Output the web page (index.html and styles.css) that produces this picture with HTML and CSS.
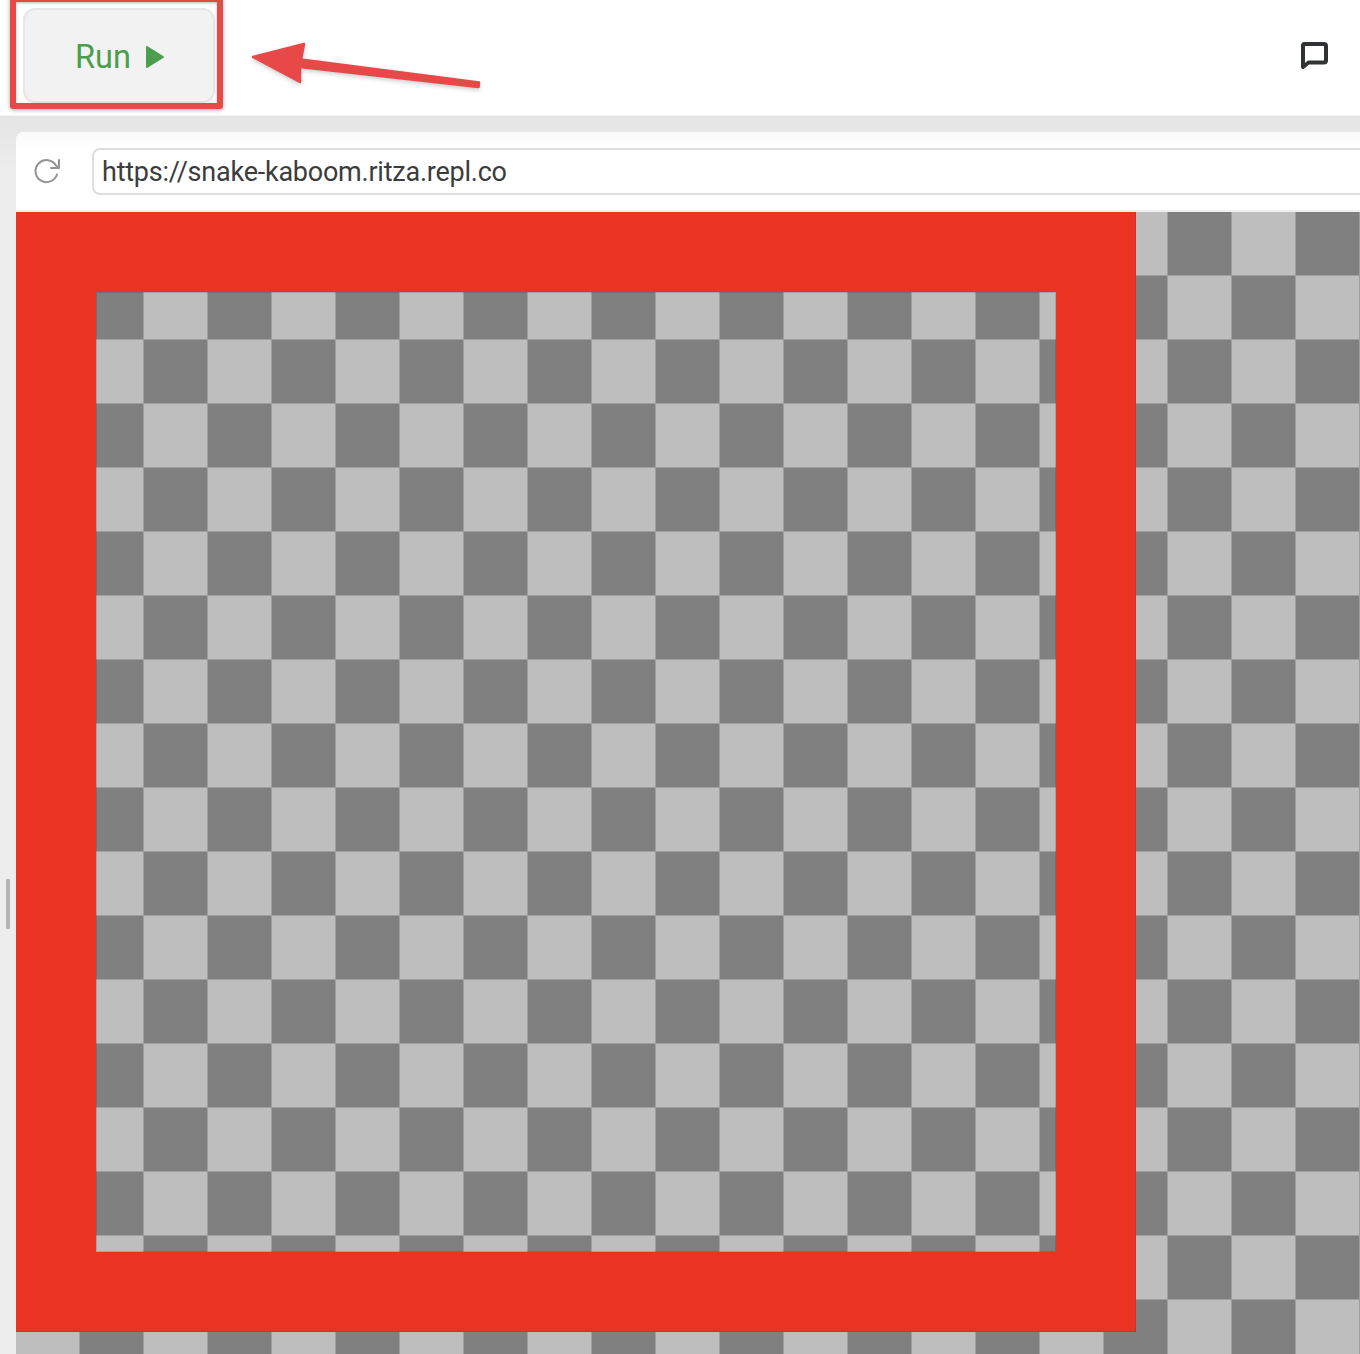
FILE: index.html
```html
<!DOCTYPE html>
<html lang="en">
<head>
<meta charset="utf-8">
<title>Snake Kaboom</title>
<link rel="stylesheet" href="styles.css">
</head>
<body>
<header class="topbar">
  <button class="run">
    <span class="run-label">Run</span>
    <svg class="play" width="20" height="24" viewBox="0 0 20 24"><path d="M2 2 18 12 2 22Z" fill="#4b9e4e" stroke="#4b9e4e" stroke-width="2" stroke-linejoin="round"/></svg>
  </button>
  <svg class="chat" width="32" height="32" viewBox="0 0 32 32"><path d="M4 5.5Q4 4 5.500 4H25Q27 4 27 6V20.500Q27 22.500 25 22.500H9.500L4 27Z" fill="none" stroke="#303233" stroke-width="4" stroke-linejoin="round"/></svg>
  <div class="highlight"></div>
  <svg class="arrow" width="244" height="64" viewBox="0 0 244 64"><path d="M13 27 64 14 61 29.500 239 52.500 238.500 57 60 37 60 52Z" fill="#e74848" stroke="#e74848" stroke-width="2.500" stroke-linejoin="round"/></svg>
</header>
<main class="workspace">
  <div class="divider"><div class="grip"></div></div>
  <section class="preview">
    <div class="address-bar">
      <svg class="reload" width="30" height="30" viewBox="0 0 30 30" fill="none" stroke="#939393" stroke-width="2" stroke-linecap="round" stroke-linejoin="round"><path d="M25 18.500A11 11 0 1 1 24 9.500L26.500 12M27 4V12H19"/></svg>
      <div class="url"><span class="url-text">https://snake-kaboom.ritza.repl.co</span></div>
    </div>
    <div class="game checker">
      <div class="wall"><div class="field checker"></div></div>
    </div>
  </section>
</main>
</body>
</html>
```
FILE: styles.css
```css
* { box-sizing: border-box; }
body {
  margin: 0;
  width: 1360px;
  height: 1354px;
  overflow: hidden;
  display: flex;
  flex-direction: column;
  background: #fff;
  font-family: Roboto, "Noto Sans", sans-serif;
}
.topbar {
  position: relative;
  flex: none;
  height: 116px;
  display: flex;
  align-items: flex-start;
  justify-content: space-between;
  padding: 8px 29px 0 23px;
  border-bottom: 1px solid #f3f3f3;
}
.run {
  width: 192px;
  height: 95px;
  display: flex;
  align-items: center;
  gap: 15px;
  padding: 0 0 0 50px;
  border: 2px solid #e6e6e6;
  border-radius: 12px;
  background: #f2f2f2;
  color: #4b9e4e;
  font: 32.5px Roboto, sans-serif;
}
.run-label { width: 55px; white-space: nowrap; padding-top: 2px; }
.play { flex: none; margin-top: 3px; }
.chat { margin-top: 32px; }
.highlight {
  position: absolute;
  left: 10px;
  top: -4px;
  width: 213px;
  height: 113px;
  border: 6px solid #e74848;
  border-radius: 3px;
  box-shadow: 0 1px 4px #0005, inset 0 1px 3px #0004;
}
.arrow {
  position: absolute;
  left: 240px;
  top: 30px;
  filter: drop-shadow(0 2px 2px #0003);
}
.workspace {
  flex: 1;
  min-height: 0;
  display: flex;
  background: linear-gradient(#e5e5e5, #ededed 60px);
}
.divider { flex: none; width: 16px; padding: 763px 0 0 6px; }
.grip { width: 4px; height: 50px; border-radius: 1px; background: #b5b5b5; }
.preview {
  flex: 1;
  min-width: 0;
  margin-top: 16px;
  display: flex;
  flex-direction: column;
  overflow: hidden;
  border-top-left-radius: 8px;
  background: #fff;
}
.address-bar {
  flex: none;
  height: 80px;
  display: flex;
  align-items: center;
  gap: 30px;
  padding-left: 16px;
  border-bottom: 2px solid #f0f0f0;
  background: linear-gradient(#fbfbfb, #fff 22px);
}
.reload { flex: none; }
.url {
  flex: 1;
  height: 47px;
  display: flex;
  align-items: center;
  padding-left: 8px;
  border: 2px solid #dedede;
  border-right: 0;
  border-radius: 8px 0 0 8px;
  background: #fff;
}
.url-text { padding-top: 2px; color: #3b3c3d; font-size: 27px; letter-spacing: -0.235px; white-space: nowrap; }
/* two-tone tiles, 64px each, with a thin mid-grey seam between them */
.checker {
  background-image:
    linear-gradient(90deg, transparent 63px, #9f9f9f 63px),
    linear-gradient(transparent 63px, #9f9f9f 63px),
    conic-gradient(#bebebe 25%, #808080 0 50%, #bebebe 0 75%, #808080 0);
  background-size: 64px 64px, 64px 64px, 128px 128px;
}
.game { flex: 1; min-height: 0; }
.wall {
  width: 1120px;
  height: 1120px;
  padding: 80px;
  background: #ea3323;
  box-shadow: inset -1px -1px 0 #c0392f;
}
.field { width: 960px; height: 960px; background-position: -80px -80px; box-shadow: inset 0 0 0 1px #0002; }
```
